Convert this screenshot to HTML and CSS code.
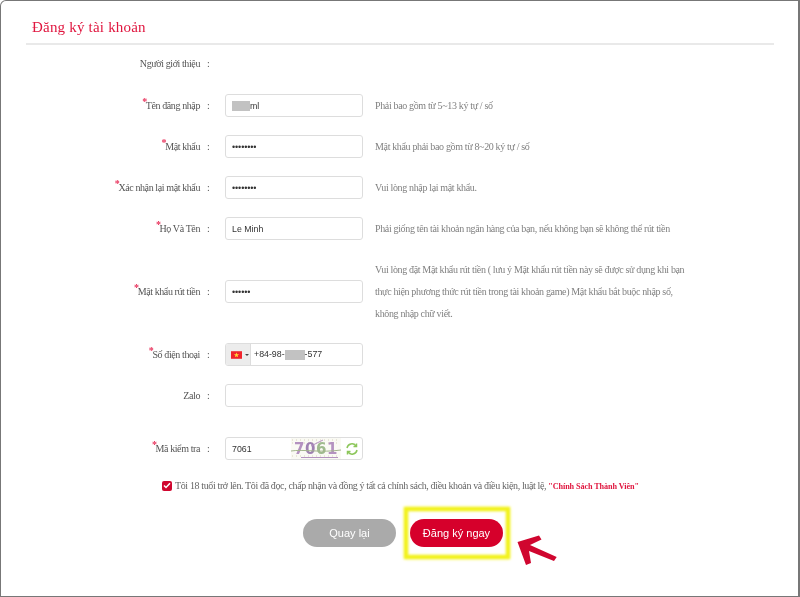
FILE: index.html
```html
<!DOCTYPE html>
<html lang="vi">
<head>
<meta charset="utf-8">
<title>Đăng ký tài khoản</title>
<link rel="stylesheet" href="styles.css">
</head>
<body>
<main class="frame">
  <h1 class="title">Đăng ký tài khoản</h1>
  <form class="form">
    <div class="row row-plain">
      <label class="label">Người giới thiệu</label><span class="colon">:</span>
    </div>
    <div class="row">
      <label class="label req">Tên đăng nhập</label><span class="colon">:</span>
      <div class="field"><span class="mask mask-user"></span><span class="val val-user">ml</span></div>
      <p class="hint">Phải bao gồm từ 5~13 ký tự / số</p>
    </div>
    <div class="row">
      <label class="label req">Mật khẩu</label><span class="colon">:</span>
      <div class="field"><span class="val dots">••••••••</span></div>
      <p class="hint">Mật khẩu phải bao gồm từ 8~20 ký tự / số</p>
    </div>
    <div class="row">
      <label class="label req">Xác nhận lại mật khẩu</label><span class="colon">:</span>
      <div class="field"><span class="val dots">••••••••</span></div>
      <p class="hint">Vui lòng nhập lại mật khẩu.</p>
    </div>
    <div class="row">
      <label class="label req">Họ Và Tên</label><span class="colon">:</span>
      <div class="field"><span class="val">Le Minh</span></div>
      <p class="hint">Phải giống tên tài khoản ngân hàng của bạn, nếu không bạn sẽ không thể rút tiền</p>
    </div>
    <div class="row">
      <label class="label req">Mật khẩu rút tiền</label><span class="colon">:</span>
      <div class="field"><span class="val dots">••••••</span></div>
      <p class="hint hint-long">Vui lòng đặt Mật khẩu rút tiền ( lưu ý Mật khẩu rút tiền này sẽ được sử dụng khi bạn thực hiện phương thức rút tiền trong tài khoản game) Mật khẩu bắt buộc nhập số, không nhập chữ viết.</p>
    </div>
    <div class="row">
      <label class="label req">Số điện thoại</label><span class="colon">:</span>
      <div class="field field-phone">
        <span class="flagbox">
          <svg class="flag" width="16" height="11" viewBox="0 0 16 11"><rect width="16" height="11" fill="#f0232b"/><polygon points="8,1.8 9,4.4 11.8,4.4 9.6,6.1 10.4,8.8 8,7.2 5.6,8.8 6.4,6.1 4.2,4.4 7,4.4" fill="#ffd83a"/></svg>
          <span class="caret"></span>
        </span>
        <span class="val">+84-98-<span class="mask mask-phone"></span>-577</span>
      </div>
    </div>
    <div class="row row-zalo">
      <label class="label">Zalo</label><span class="colon">:</span>
      <div class="field"></div>
    </div>
    <div class="row">
      <label class="label req">Mã kiểm tra</label><span class="colon">:</span>
      <div class="field field-captcha">
        <span class="val">7061</span>
        <svg class="captcha" width="50" height="21" viewBox="0 0 50 21">
          <rect width="50" height="21" fill="#faf9f3"/>
          <path d="M1 2 H49 M1 5 H49 M1 18 H49" stroke="#cfcbb0" stroke-dasharray="1 3" fill="none"/>
          <text x="3" y="16" class="captcha-a">7</text>
          <text x="14" y="16" class="captcha-b">0</text>
          <text x="25" y="16" class="captcha-c">6</text>
          <text x="36" y="16" class="captcha-a">1</text>
          <path d="M0 13 C12 11 30 15 50 12" stroke="#93a878" fill="none"/>
          <path d="M10 19.5 L47 19.5" stroke="#a77fb5"/>
          <path d="M20 8 L32 2" stroke="#a77fb5"/>
        </svg>
        <svg class="refresh" width="14" height="14" viewBox="0 0 14 14" fill="none" stroke="#8cc65a" stroke-width="1.5">
          <path d="M2 6 A5 5 0 0 1 11 4"/><path d="M12 8 A5 5 0 0 1 3 10"/>
          <path d="M11.5 1.5 V4.5 H8.5"/><path d="M2.5 12.5 V9.5 H5.5"/>
        </svg>
      </div>
    </div>
    <div class="agree">
      <span class="check"><svg width="8" height="7" viewBox="0 0 8 7" fill="none" stroke="#fff" stroke-width="1.5"><path d="M1 3.5 L3 5.5 L7 1.2"/></svg></span>
      <span>Tôi 18 tuổi trở lên. Tôi đã đọc, chấp nhận và đồng ý tất cả chính sách, điều khoản và điều kiện, luật lệ, <a class="policy">"Chính Sách Thành Viên"</a></span>
    </div>
    <div class="actions">
      <button type="button" class="btn btn-back">Quay lại</button>
      <button type="button" class="btn btn-submit">Đăng ký ngay</button>
    </div>
  </form>
  <div class="highlight"></div>
  <svg class="arrow" width="44" height="36" viewBox="0 0 44 36"><path d="M1.5 8 L23 1.5 L25.5 5.5 L14 11 L40.7 23 L38 27 L13 17 L15 29 L10 31 Z" fill="#d0062f"/></svg>
</main>
</body>
</html>
```
FILE: styles.css
```css
* { box-sizing: border-box; }
html, body { margin: 0; padding: 0; background: #fff; }
body { width: 800px; height: 597px; overflow: hidden; font-family: "Liberation Serif", serif; }
.frame { position: relative; width: 800px; height: 597px; padding: 0 24px 0 25px; border: 2px solid #777; border-width: 1px 2px 1px 1px; border-radius: 6px 0 0 0; filter: blur(.3px); }
.title { margin: 0; height: 44px; padding: 16px 0 0 6px; font-size: 15px; line-height: 20px; font-weight: 400; color: #e0163f; border-bottom: 2px solid #e9e9e9; letter-spacing: .2px; }
.form { display: flex; flex-direction: column; gap: 18px; padding-top: 48px; }
.row { display: grid; grid-template-columns: 174px 25px 138px 1fr; align-items: center; min-height: 23px; color: #666; font-size: 10px; letter-spacing: -.4px; }
.row-plain { margin-top: -41px; margin-bottom: 1px; }
.label { text-align: right; position: relative; color: #555; }
.req::before { content: "*"; color: #e8305a; font-size: 10px; font-weight: 700; position: relative; top: -4px; line-height: 0; margin-right: -1px; }
.colon { padding-left: 7px; color: #555; }
.field { display: flex; align-items: center; height: 23px; width: 138px; border: 1px solid #ddd; border-radius: 3px; background: #fff; padding-left: 6px; font-family: "Liberation Sans", sans-serif; font-size: 8.8px; letter-spacing: 0; color: #333; position: relative; overflow: hidden; }
.val { white-space: nowrap; }
.dots { font-size: 9px; letter-spacing: -.1px; }
.mask { display: inline-block; background: #c2c2c2; height: 10px; }
.mask-user { width: 18px; }
.mask-phone { width: 20px; vertical-align: middle; }
.hint { margin: 0 0 0 12px; font-size: 10px; letter-spacing: -.35px; line-height: 22px; color: #808080; }
.hint-long { width: 315px; margin-top: 1px; }
.field-phone { padding-left: 0; }
.flagbox { display: flex; align-items: center; gap: 3px; width: 25px; height: 100%; background: #ececec; padding-left: 5px; margin-right: 3px; border-right: 1px solid #ddd; flex: none; }
.flag { width: 11px; height: 8px; flex: none; }
.caret { width: 0; height: 0; border: 2px solid transparent; border-top: 2.5px solid #444; border-bottom: 0; }
.row-zalo { margin-bottom: 12px; }
.captcha { position: absolute; left: 65px; top: 0; opacity: .85; filter: blur(.4px); }
.captcha text { font-family: "DejaVu Sans", sans-serif; font-size: 15px; font-weight: 700; }
.captcha-a { fill: #a77fb5; }
.captcha-b { fill: #8f6ca5; }
.captcha-c { fill: #8faf7a; }
.refresh { position: absolute; right: 3px; top: 4px; }
.agree { display: flex; align-items: center; gap: 3px; margin-top: 2px; margin-left: 136px; font-size: 10px; letter-spacing: -.37px; color: #666; white-space: nowrap; }
.check { display: flex; align-items: center; justify-content: center; width: 10px; height: 10px; background: #d0062f; border-radius: 2px; flex: none; }
.policy { color: #e0163f; font-size: 8.2px; letter-spacing: -.1px; font-weight: 700; }
.actions { display: flex; gap: 14px; margin-left: 277px; margin-top: 10px; }
.btn { width: 93px; height: 28px; border: 0; border-radius: 14px; font-family: "Liberation Sans", sans-serif; font-size: 11px; color: #fff; }
.btn-back { background: #aaa; }
.btn-submit { background: #d6002b; }
.highlight { position: absolute; left: 403px; top: 506px; width: 106px; height: 52px; border: 4px solid #f2f21c; box-shadow: 0 0 2px #f2f21c, inset 0 0 2px #f2f21c; filter: blur(.8px); }
.arrow { position: absolute; left: 515px; top: 533px; }
```
